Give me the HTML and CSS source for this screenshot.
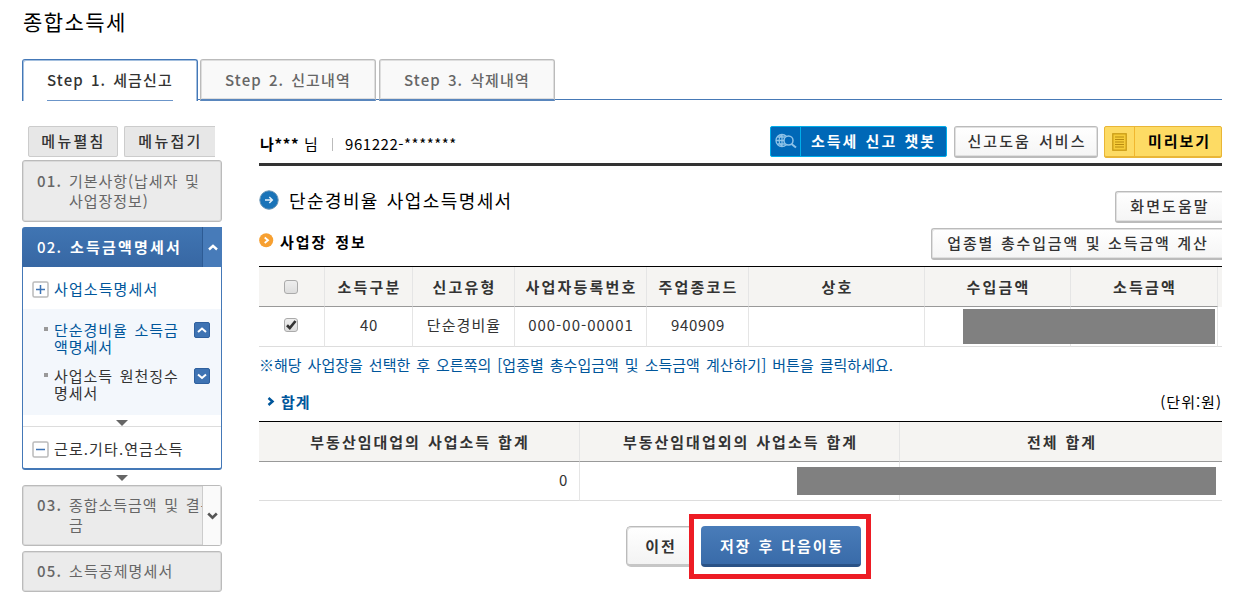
FILE: index.html
```html
<!DOCTYPE html>
<html lang="ko">
<head>
<meta charset="utf-8">
<title>종합소득세</title>
<link rel="stylesheet" href="styles.css">
</head>
<body>
<div class="page">
  <h1 class="title">종합소득세</h1>
  <nav class="tabs">
    <a class="tab active"><span>Step 1. 세금신고</span></a>
    <a class="tab second"><span>Step 2. 신고내역</span></a>
    <a class="tab"><span>Step 3. 삭제내역</span></a>
  </nav>
  <div class="columns">
    <aside class="side">
      <div class="toggles"><button class="toggle">메뉴펼침</button><button class="toggle cut">메뉴접기</button></div>
      <div class="step two"><b class="num">01.</b><span>기본사항(납세자 및<br>사업장정보)</span></div>
      <div class="open">
        <div class="open-head"><b class="num">02.</b><b class="name">소득금액명세서</b>
          <span class="caret"><svg width="10" height="7" viewBox="0 0 10 7"><path d="M1 5.5 5 1.8 9 5.5" fill="none" stroke="#fff" stroke-width="2.4"/></svg></span>
        </div>
        <div class="open-body">
          <div class="group blue"><svg class="sq" width="17" height="17"><rect x="1" y="1" width="15" height="15" rx="1.5" fill="#fff" stroke="#bbb" stroke-width="1.5"/><path d="M4 8.5H13M8.5 4V13" stroke="#3c73b5" stroke-width="1.5"/></svg><span>사업소득명세서</span></div>
          <ul class="subs">
            <li class="sub blue"><span class="txt">단순경비율 소득금<br>액명세서</span><svg class="mini" width="16" height="16"><rect x=".5" y=".5" width="15" height="15" rx="1.5" fill="#3e73b3" stroke="#2f609e"/><path d="M4 10 8 6.5 12 10" fill="none" stroke="#fff" stroke-width="2"/></svg></li>
            <li class="sub"><span class="txt">사업소득 원천징수<br>명세서</span><svg class="mini" width="16" height="16"><rect x=".5" y=".5" width="15" height="15" rx="1.5" fill="#3e73b3" stroke="#2f609e"/><path d="M4 6.5 8 10 12 6.5" fill="none" stroke="#fff" stroke-width="2"/></svg></li>
          </ul>
          <div class="down"></div>
          <div class="group last"><svg class="sq" width="17" height="17"><rect x="1" y="1" width="15" height="15" rx="1.5" fill="#fff" stroke="#bbb" stroke-width="1.5"/><path d="M4 8.5H13" stroke="#3c73b5" stroke-width="1.5"/></svg><span>근로.기타.연금소득</span></div>
        </div>
      </div>
      <div class="down between"></div>
      <div class="step three"><b class="num">03.</b><span class="clip">종합소득금액 및 결손<br>금</span><span class="caret pale"><svg width="11" height="8" viewBox="0 0 11 8"><path d="M1.2 1.5 5.5 5.7 9.8 1.5" fill="none" stroke="#555" stroke-width="2.6"/></svg></span></div>
      <div class="step one"><b class="num">05.</b><span>소득공제명세서</span></div>
    </aside>
    <main class="main">
      <div class="userbar">
        <div class="user"><b>나***</b><span class="nim">님</span><i class="bar"></i><span class="birth">961222-*******</span></div>
        <div class="actions">
          <button class="chat"><span class="ic"><svg width="22" height="17" viewBox="0 0 22 17"><g fill="none" stroke="#8fc3e8" stroke-width="1.3"><circle cx="7" cy="7.5" r="6"/><path d="M1 7.5H9M7 1.5V14M2.5 4H10M2.5 11H10M7 1.5C3 5 3 10 7 13.5"/></g><circle cx="13.5" cy="7.5" r="4.5" fill="#0066b8" stroke="#8fc3e8" stroke-width="1.5"/><path d="M16.5 11 21 14.5" stroke="#8fc3e8" stroke-width="2"/></svg></span><span class="lb">소득세 신고 챗봇</span></button>
          <button class="btn help">신고도움 서비스</button>
          <button class="preview"><span class="ic"><svg width="15" height="18"><rect x=".8" y=".8" width="13.4" height="16.4" fill="#f6cc38" stroke="#c99b16" stroke-width="1.3"/><path d="M3 4H12M3 6.5H12M3 9H12M3 11.5H12M3 14H12" stroke="#b88b10" stroke-width="1.1"/></svg></span><span class="lb">미리보기</span></button>
        </div>
      </div>
      <div class="heading">
        <svg width="20" height="20"><circle cx="10" cy="10" r="9.2" fill="#1973b8" stroke="#6793b4" stroke-width="1"/><path d="M6 10H13M10.3 7 13.3 10 10.3 13" fill="none" stroke="#e2f1fc" stroke-width="1.5"/></svg>
        <h2>단순경비율 사업소득명세서</h2><button class="btn flush screen">화면도움말</button>
      </div>
      <div class="section">
        <svg width="15" height="15"><circle cx="7.2" cy="7.2" r="7" fill="#f7a031"/><path d="M5.7 4.5 9 7.2 5.7 10" fill="none" stroke="#fff" stroke-width="1.8"/></svg>
        <h3>사업장 정보</h3><button class="btn flush calc">업종별 총수입금액 및 소득금액 계산</button>
      </div>
      <div class="grid biz">
        <div class="th"><i class="check"></i></div><div class="th">소득구분</div><div class="th">신고유형</div><div class="th">사업자등록번호</div><div class="th">주업종코드</div><div class="th">상호</div><div class="th">수입금액</div><div class="th">소득금액</div><div class="th tail"></div>
        <div class="td"><i class="check"><svg width="12" height="12"><path d="M2 6.2 4.8 9 10.5 2" fill="none" stroke="#333" stroke-width="2.7"/></svg></i></div><div class="td">40</div><div class="td kr">단순경비율</div><div class="td wide">000-00-00001</div><div class="td">940909</div><div class="td"></div><div class="td"></div><div class="td"></div><div class="td tail"></div>
        <div class="mask"></div>
      </div>
      <p class="note"><span class="mark">※</span>해당 사업장을 선택한 후 오른쪽의 [업종별 총수입금액 및 소득금액 계산하기] 버튼을 클릭하세요.</p>
      <div class="sumhead"><svg width="8" height="9"><path d="M1.5 1 5.5 4.5 1.5 8" fill="none" stroke="#00569b" stroke-width="2.5"/></svg><h4>합계</h4><span class="unit">(단위:원)</span></div>
      <div class="grid sum">
        <div class="th">부동산임대업의 사업소득 합계</div><div class="th">부동산임대업외의 사업소득 합계</div><div class="th">전체 합계</div>
        <div class="td num0">0</div><div class="td"></div><div class="td"></div>
        <div class="mask"></div>
      </div>
      <div class="foot"><button class="prev">이전</button><div class="focus"><button class="save">저장 후 다음이동</button></div></div>
    </main>
  </div>
</div>
</body>
</html>
```

FILE: styles.css
```css
* { box-sizing: border-box; }
body { margin: 0; background: #fff; color: #333; font: 15px/20px "Noto Sans CJK KR", sans-serif; letter-spacing: .95px; word-spacing: 1.6px; }
h1, h2, h3, h4, p, ul { margin: 0; padding: 0; font-size: 15px; font-weight: 400; }
ul { list-style: none; }
svg { display: block; flex: none; }
button { font: inherit; letter-spacing: inherit; word-spacing: inherit; margin: 0; padding: 0; white-space: nowrap; color: #333; }
.page { width: 1239px; height: 595px; padding: 7px 17px 0 22px; overflow: hidden; }
.title { height: 52px; padding-left: 1px; color: #000; font-size: 21px; line-height: 28px; letter-spacing: 1.4px; }

.tabs { display: flex; height: 42px; background: linear-gradient(#4679b6, #4679b6) 176px 40px / 100% 1px no-repeat; }
.tab { display: flex; width: 176px; height: 42px; padding: 1px; margin-right: 3px; justify-content: center; border: 1px solid #bbb; border-bottom: 2px solid #5986bd; border-radius: 3px 3px 0 0; background: #f9f9f9; box-shadow: inset 0 0 0 1px #dedede; color: #666; font-weight: 500; letter-spacing: 1.15px; }
.tab span { width: 126px; height: 40px; line-height: 38px; white-space: nowrap; }
.tab.active { margin-right: 2px; padding-bottom: 0; border: 1px solid #4478b7; border-bottom: 0; background: #fff; box-shadow: inset 1px 1px #a5c0df, inset -1px 0 #a5c0df; color: #333; }
.tab.active span { border-bottom: 1px solid #6b95c9; }

.columns { display: flex; gap: 37px; padding-top: 25px; }
.side { width: 200px; flex: none; }
.toggles { display: flex; gap: 6px; padding-left: 6px; height: 34px; }
.toggle { width: 90px; height: 31px; padding: 0 0 2px 1px; border: 1px solid #ccc; border-radius: 2px; background: #e7e7e7; font-weight: 500; letter-spacing: 2.3px; line-height: 25px; }
.toggle.cut { width: 91px; border-right: 0; border-radius: 2px 0 0 2px; }
.step { display: flex; position: relative; padding: 10px 0 0 14px; border: 1px solid #bbb; border-radius: 3px; background: #ebebeb; box-shadow: inset 0 0 0 1px #dadada; color: #666; white-space: nowrap; }
.num { width: 32px; flex: none; font-weight: 500; letter-spacing: 1.2px; }
.two { height: 62px; margin-bottom: 5px; }
.three { height: 61px; margin-bottom: 5px; padding-top: 9px; }
.one { height: 41px; padding-top: 9px; letter-spacing: 1.1px; }
.clip { width: 133px; overflow: hidden; }
.open-head { display: flex; height: 40px; padding-left: 15px; align-items: center; border-radius: 3px 3px 0 0; background: linear-gradient(#4075b3, #3767a3); color: #fff; }
.name { flex: 1; padding-left: 1px; font-weight: 700; letter-spacing: 2.2px; white-space: nowrap; }
.caret { display: flex; width: 20px; height: 40px; flex: none; align-items: center; justify-content: center; border-left: 1px solid #2d5b94; background: #477bb9; }
.caret.pale { width: 19px; height: 59px; margin: -9px 0 0 auto; border-left: 1px solid #ccc; background: #fafafa; box-shadow: inset -1px 0 #dadada; }
.open-body { height: 203px; border: 2px solid #4478b7; border-width: 0 1px 2px 1px; border-radius: 0 0 3px 3px; }
.group { display: flex; gap: 5px; height: 42px; padding: 2px 0 0 9px; align-items: center; white-space: nowrap; letter-spacing: 1.1px; }
.blue { color: #00569b; }
.subs { height: 106px; padding-top: 13px; background: #f3f7fc; }
.sub { display: flex; position: relative; height: 46px; padding-left: 31px; line-height: 17px; }
.sub::before { content: ""; position: absolute; left: 21px; top: 5px; width: 4px; height: 4px; background: #999; }
.txt { width: 140px; margin-top: -1px; white-space: nowrap; }
.down { height: 12px; border-bottom: 1px solid #ddd; padding: 5px 0 0 93px; }
.down::before { content: ""; display: block; width: 12px; height: 6px; background: #666; clip-path: polygon(0 0, 100% 0, 50% 100%); }
.down.between { height: 15px; border: 0; padding-left: 94px; }
.last { height: 41px; padding-top: 4px; }
.last span { margin-top: -2px; }

.main { width: 963px; flex: none; }
.userbar { display: flex; height: 40px; justify-content: space-between; border-bottom: 3px solid #333; }
.user { display: flex; align-items: center; padding: 0 0 1px 1px; color: #000; white-space: nowrap; }
.user b { width: 44px; font-weight: 700; letter-spacing: .7px; }
.nim { width: 28px; }
.bar { width: 1px; height: 13px; margin-right: 12px; background: #bbb; }
.birth { letter-spacing: .55px; }
.actions { display: flex; gap: 7px; }
.actions button { height: 32px; }
.btn { border: 1px solid #bbb; border-bottom-width: 2px; border-radius: 3px; background: linear-gradient(#fff, #f5f5f5); box-shadow: inset 0 0 0 1px #e0e0e0; padding: 0 0 1px 2px; font-weight: 500; letter-spacing: 2.1px; line-height: 26px; }
.help { width: 144px; }
.chat, .preview { display: flex; align-items: center; border: 1px solid #00aeea; border-radius: 2px; background: #0068b7; color: #fff; font-weight: 700; letter-spacing: 2px; }
.chat { word-spacing: 1px; }
.actions .chat { width: 177px; height: 31px; }
.preview { width: 118px; margin-left: -1px; border-color: #e9b637; background: #fddb64; box-shadow: inset 0 -1px #e9b637; color: #000; }
.ic { display: flex; width: 30px; height: 100%; align-items: center; justify-content: center; border-right: 1px solid #00aeea; }
.preview .ic { border-color: #f1b72f; }
.lb { flex: 1; padding-bottom: 3px; line-height: 25px; text-align: center; }
.preview .lb { padding-left: 3px; }
.heading { display: flex; height: 62px; padding-top: 25px; }
.heading h2 { flex: 1; margin-top: -1px; padding-left: 10px; color: #000; font-size: 18px; letter-spacing: 1.4px; }
.heading svg { margin-top: -1px; }
.flush { border-right: 0; border-radius: 3px 0 0 3px; box-shadow: inset 1px 1px #e0e0e0, inset 0 -1px #e0e0e0; }
.screen { width: 107px; height: 32px; }
.section { display: flex; height: 38px; padding-top: 5px; }
.section h3 { flex: 1; margin-top: -1px; padding-left: 6px; color: #000; font-weight: 700; letter-spacing: 2px; }
.calc { width: 291px; height: 32px; margin-top: -5px; letter-spacing: 1.85px; word-spacing: .6px; }

.grid { display: grid; position: relative; border-top: 1px solid #000; }
.biz { grid-template: 40px 40px / 66px 88px 102px 132px 102px 176px 146px 147px 4px; }
.sum { grid-template: 40px 39px / 321px 320px 322px; }
.th, .td { display: flex; align-items: center; justify-content: center; border-right: 1px solid #e5e5e5; white-space: nowrap; }
.th { padding-left: 2px; border-bottom: 1px solid #999; background: #f5f4f2; font-weight: 700; letter-spacing: 2.2px; }
.td { padding: 0 0 3px 1px; border-bottom: 1px solid #ddd; letter-spacing: .7px; }
.wide { letter-spacing: 1px; }
.td.kr { letter-spacing: 1.1px; }
.tail { border-right: 0; }
.th.tail { border-bottom: 0; }
.sum .th:nth-child(3n), .sum .td:nth-child(3n) { border-right: 0; }
.sum .th { letter-spacing: 2px; word-spacing: .8px; }
.num0 { justify-content: flex-end; padding: 0 11px 2px 0; }
.mask { position: absolute; background: #808080; }
.biz .mask { left: 704px; top: 42px; width: 252px; height: 35px; }
.sum .mask { left: 538px; top: 45px; width: 419px; height: 28px; }
.check { width: 14px; height: 14px; margin-left: -3px; border: 1px solid #aaa; border-radius: 3px; background: linear-gradient(#eee, #ddd); }
.note { height: 46px; padding-top: 8px; color: #00569b; letter-spacing: .03px; word-spacing: 1.7px; white-space: nowrap; }
.mark { display: inline-block; width: 15px; }
.sumhead { display: flex; height: 28px; padding-left: 8px; align-items: flex-start; color: #000; }
.sumhead svg { margin-top: 4px; }
.sumhead h4 { flex: 1; margin-top: -1px; padding-left: 6px; color: #00569b; font-weight: 700; }
.unit { margin-top: -1px; letter-spacing: 1px; }
.foot { display: flex; padding: 13px 0 0 367px; }
.prev { width: 63px; height: 41px; margin-top: 12px; padding-left: 6px; border: 1px solid #bbb; border-right: 0; border-bottom: 3px solid #c6c6c6; border-radius: 5px 0 0 5px; background: linear-gradient(#fff, #f3f3f3); box-shadow: inset 1px 1px #e0e0e0; font-weight: 700; letter-spacing: 2px; }
.focus { width: 182px; height: 65px; padding: 7px; border: 5px solid #ed1c24; }
.save { width: 160px; height: 41px; padding: 2px 0 0 2px; border: 0; border-bottom: 3px solid #2a5286; border-radius: 4px; background: linear-gradient(#497cb9, #396ba9); color: #fff; font-weight: 700; letter-spacing: 1.9px; word-spacing: 1px; }
```
